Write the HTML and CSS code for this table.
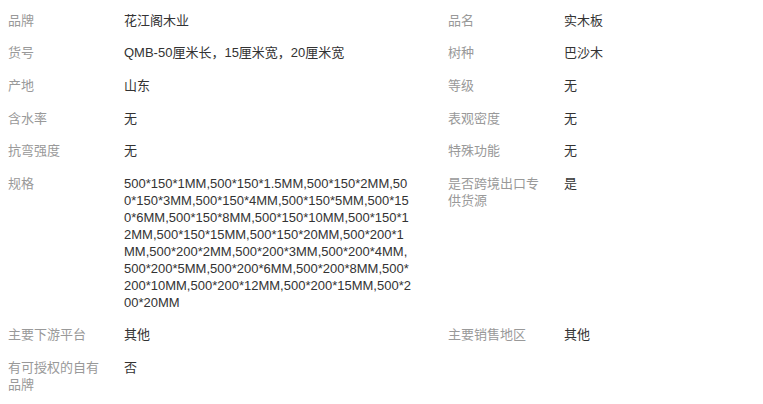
FILE: index.html
```html
<!DOCTYPE html>
<html lang="zh-CN">
<head>
    <meta charset="UTF-8">
    <meta name="viewport" content="width=device-width, initial-scale=1.0">
    <title>商品属性</title>
    <link rel="stylesheet" href="styles.css">
</head>
<body>

    <div class="attr-list">
        <div class="attr-item">
            <div class="attr-name">品牌</div>
            <div class="attr-value">花江阁木业</div>
        </div>
        <div class="attr-item">
            <div class="attr-name">品名</div>
            <div class="attr-value">实木板</div>
        </div>
        <div class="attr-item">
            <div class="attr-name">货号</div>
            <div class="attr-value">QMB-50厘米长，15厘米宽，20厘米宽</div>
        </div>
        <div class="attr-item">
            <div class="attr-name">树种</div>
            <div class="attr-value">巴沙木</div>
        </div>
        <div class="attr-item">
            <div class="attr-name">产地</div>
            <div class="attr-value">山东</div>
        </div>
        <div class="attr-item">
            <div class="attr-name">等级</div>
            <div class="attr-value">无</div>
        </div>
        <div class="attr-item">
            <div class="attr-name">含水率</div>
            <div class="attr-value">无</div>
        </div>
        <div class="attr-item">
            <div class="attr-name">表观密度</div>
            <div class="attr-value">无</div>
        </div>
        <div class="attr-item">
            <div class="attr-name">抗弯强度</div>
            <div class="attr-value">无</div>
        </div>
        <div class="attr-item">
            <div class="attr-name">特殊功能</div>
            <div class="attr-value">无</div>
        </div>
        <div class="attr-item">
            <div class="attr-name">规格</div>
            <div class="attr-value">500*150*1MM,500*150*1.5MM,500*150*2MM,500*150*3MM,500*150*4MM,500*150*5MM,500*150*6MM,500*150*8MM,500*150*10MM,500*150*12MM,500*150*15MM,500*150*20MM,500*200*1MM,500*200*2MM,500*200*3MM,500*200*4MM,500*200*5MM,500*200*6MM,500*200*8MM,500*200*10MM,500*200*12MM,500*200*15MM,500*200*20MM</div>
        </div>
        <div class="attr-item">
            <div class="attr-name">是否跨境出口专供货源</div>
            <div class="attr-value">是</div>
        </div>
        <div class="attr-item">
            <div class="attr-name">主要下游平台</div>
            <div class="attr-value">其他</div>
        </div>
        <div class="attr-item">
            <div class="attr-name">主要销售地区</div>
            <div class="attr-value">其他</div>
        </div>
        <div class="attr-item">
            <div class="attr-name">有可授权的自有品牌</div>
            <div class="attr-value">否</div>
        </div>
    </div>

</body>
</html>
```

FILE: styles.css
```css
body {
    margin: 0;
    background: #fff;
    font-family: "Liberation Sans", "Noto Sans CJK SC", sans-serif;
    font-size: 13px;
    line-height: 17px;
}

.attr-list {
    display: grid;
    grid-template-columns: 440px minmax(0, 1fr);
    padding: 4px 8px;
}

.attr-item {
    display: flex;
    align-items: flex-start;
    min-width: 0;
    padding: 7.8px 0;
}

.attr-name {
    width: 100px;
    margin-right: 16px;
    color: #999;
    flex-shrink: 0;
}

.attr-value {
    flex: 0 1 288px;
    min-width: 0;
    color: #333;
    word-break: break-all;
}
```
